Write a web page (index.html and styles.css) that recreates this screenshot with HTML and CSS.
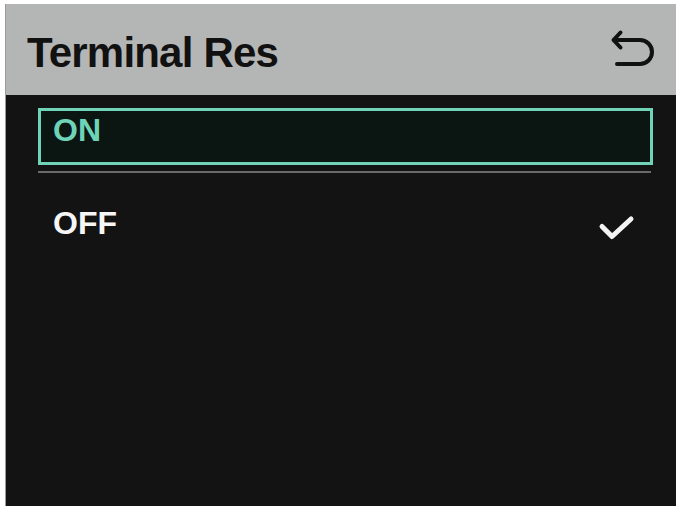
FILE: index.html
```html
<!DOCTYPE html>
<html>
<head>
<meta charset="utf-8">
<link rel="stylesheet" href="styles.css">
</head>
<body>
<div class="screen">
  <div class="header">
    <div class="title">Terminal Res</div>
    <svg class="back" width="48" height="42" viewBox="608 28 48 42">
      <path d="M620.5,32.5 L613.5,40 L620.5,47.5 M613.5,40 H640 A12,12 0 0 1 640,64 H617" fill="none" stroke="#111" stroke-width="4" stroke-linecap="round" stroke-linejoin="round"/>
    </svg>
  </div>
  <div class="list">
    <div class="item selected"><span class="label">ON</span></div>
    <div class="divider"></div>
    <div class="row">
      <span class="label">OFF</span>
      <svg class="check" width="40" height="40" viewBox="596 204 40 40">
        <path d="M602,226.5 L612,236.5 L631,219" fill="none" stroke="#f4f4f4" stroke-width="5" stroke-linecap="round" stroke-linejoin="round"/>
      </svg>
    </div>
  </div>
</div>
</body>
</html>
```
FILE: styles.css
```css
html, body {
  margin: 0;
  padding: 0;
  background: #ffffff;
}
body {
  font-family: "Liberation Sans", Arial, sans-serif;
}
.screen {
  margin: 4px 5px 0 5px;
  height: 502px;
  background: #131313;
  border-left: 1px solid #9a9a9a;
  box-sizing: border-box;
  overflow: hidden;
}
.header {
  height: 91px;
  background: #b4b5b5;
  display: flex;
  justify-content: space-between;
  align-items: flex-start;
  padding: 0 20px 0 21px;
  box-sizing: border-box;
}
.title {
  margin-top: 28px;
  font-size: 42px;
  line-height: 42px;
  font-weight: bold;
  letter-spacing: -0.8px;
  color: #111111;
}
.back {
  margin-top: 24px;
  display: block;
}
.list {
  display: flex;
  flex-direction: column;
}
.item {
  margin: 13px 23px 0 32px;
  height: 57px;
  box-sizing: border-box;
  border: 3px solid #70d2b6;
  background: #0b1512;
  padding: 3px 0 0 12px;
}
.label {
  font-size: 32px;
  line-height: 32px;
  font-weight: bold;
  display: block;
}
.selected .label {
  color: #6fd3b8;
}
.divider {
  margin: 6px 25px 0 32px;
  height: 2px;
  background: #6a6a6a;
}
.row {
  margin: 31px 23px 0 32px;
  display: flex;
  justify-content: space-between;
  align-items: flex-start;
  padding-left: 15px;
}
.row .label {
  color: #f6f6f6;
  padding-top: 3px;
}
.check {
  display: block;
  margin-right: 17px;
}
```
